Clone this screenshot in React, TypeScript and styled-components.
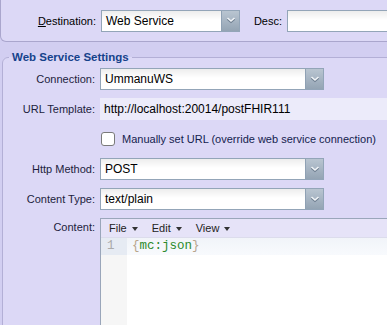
import React from 'react';
import styled, { createGlobalStyle } from 'styled-components';

const GlobalStyle = createGlobalStyle`
  html, body {
    margin: 0;
    padding: 0;
    overflow: hidden;
    background: #d2cef1;
    font-family: "Liberation Sans", Arial, sans-serif;
    font-size: 11px;
  }
`;

const Page = styled.div`
  width: 387px;
  height: 325px;
  overflow: hidden;
`;

const TopPanel = styled.div`
  display: flex;
  align-items: center;
  height: 41px;
  margin-right: -10px;
  background: #dcd8f6;
  border: 1px solid #aaa6cd;
  border-top: none;
  border-radius: 0 0 6px 6px;
`;

const TopLabel = styled.label<{ $width: number; $left?: number }>`
  width: ${(p) => p.$width}px;
  margin-left: ${(p) => p.$left ?? 0}px;
  margin-right: 5px;
  text-align: right;
  color: #000;
  white-space: nowrap;
`;

const Fieldset = styled.fieldset`
  margin: 8px -10px 0 2px;
  padding: 4px 0 0 0;
  height: 300px;
  border: 1px solid #b3afd6;
  border-radius: 6px;
  background: #dcd8f6;
`;

const Legend = styled.legend`
  margin-left: 6px;
  padding: 0 3px;
  font-size: 11.5px;
  font-weight: bold;
  color: #15428b;
  line-height: 14px;
`;

const Form = styled.div`
  display: flex;
  flex-direction: column;
  gap: 8px;
`;

const Row = styled.div<{ $top?: boolean }>`
  display: grid;
  grid-template-columns: 92px 1fr;
  column-gap: 5px;
  align-items: ${(p) => (p.$top ? 'start' : 'center')};
  min-height: 22px;
`;

const FieldLabel = styled.label<{ $pad?: number }>`
  text-align: right;
  color: #1d1d3d;
  white-space: nowrap;
  padding-top: ${(p) => p.$pad ?? 0}px;
`;

const ComboBox = styled.div<{ $width: number }>`
  display: flex;
  width: ${(p) => p.$width}px;
  height: 22px;
  box-sizing: border-box;
  border: 1px solid #93a5b8;
  background: linear-gradient(#ededed, #ffffff 45%);
`;

const ComboValue = styled.div`
  flex: 1;
  display: flex;
  align-items: center;
  padding-left: 4px;
  font-size: 12px;
  color: #000;
`;

const Trigger = styled.div`
  width: 17px;
  display: flex;
  align-items: center;
  justify-content: center;
  border-left: 1px solid #8fa1b4;
  background: linear-gradient(#b9c5d1, #94a4b4);
`;

const TextInput = styled.div`
  flex: 1;
  height: 22px;
  box-sizing: border-box;
  border: 1px solid #93a5b8;
  background: linear-gradient(#ededed, #ffffff 45%);
`;

const ReadOnlyValue = styled.div`
  height: 22px;
  display: flex;
  align-items: center;
  padding-left: 4px;
  background: #ecebfa;
  font-size: 12px;
  color: #000;
`;

const CheckRow = styled.div`
  display: flex;
  align-items: center;
  gap: 7px;
  padding-left: 1px;
`;

const CheckBox = styled.span`
  width: 12px;
  height: 12px;
  border: 1px solid #7a7a7a;
  border-radius: 3px;
  background: #fff;
`;

const CheckLabel = styled.span`
  color: #14224e;
  white-space: nowrap;
`;

const Editor = styled.div`
  height: 120px;
  border: 1px solid #9aa6ba;
  background: #fff;
`;

const EditorMenu = styled.div`
  display: flex;
  gap: 14px;
  height: 18px;
  align-items: center;
  padding-left: 8px;
  background: #e6e3f8;
  border-bottom: 1px solid #dcdcec;
  color: #222;
`;

const MenuItem = styled.span`
  display: flex;
  align-items: center;
  gap: 5px;
`;

const Caret = styled.span`
  width: 0;
  height: 0;
  margin-top: 2px;
  border-left: 3.5px solid transparent;
  border-right: 3.5px solid transparent;
  border-top: 4px solid #333;
`;

const CodeArea = styled.div`
  display: flex;
  height: 100%;
`;

const Gutter = styled.div`
  width: 26px;
  background: #f6f6f6;
`;

const GutterLine = styled.div`
  height: 17px;
  line-height: 17px;
  padding-left: 6px;
  background: #e6ebf3;
  color: #aaa;
  font-family: "Liberation Mono", monospace;
  font-size: 12.5px;
`;

const Lines = styled.div`
  flex: 1;
`;

const CodeLine = styled.div`
  height: 17px;
  line-height: 17px;
  padding-left: 5px;
  background: linear-gradient(#f1f4f9, #f8fafd);
  font-family: "Liberation Mono", monospace;
  font-size: 12.5px;
`;

const Brace = styled.span`
  color: #b8a58c;
`;

const Tag = styled.span`
  color: #2b8a2b;
`;

const Chevron = () => (
  <svg width="10" height="7" viewBox="0 0 10 7">
    <polyline points="1.5,2 5,5 8.5,2" fill="none" stroke="#6f7f90" strokeWidth="2" />
    <polyline points="1.5,1 5,4 8.5,1" fill="none" stroke="#f2f5f8" strokeWidth="1.6" />
  </svg>
);

const Combo: React.FC<{ width: number; value: string }> = ({ width, value }) => (
  <ComboBox $width={width}>
    <ComboValue>{value}</ComboValue>
    <Trigger>
      <Chevron />
    </Trigger>
  </ComboBox>
);

export default function App() {
  return (
    <Page>
      <GlobalStyle />
      <TopPanel>
        <TopLabel $width={95}>
          <u>D</u>estination:
        </TopLabel>
        <Combo width={139} value="Web Service" />
        <TopLabel $width={30} $left={12}>
          Desc:
        </TopLabel>
        <TextInput />
      </TopPanel>

      <Fieldset>
        <Legend>Web Service Settings</Legend>
        <Form>
          <Row>
            <FieldLabel>Connection:</FieldLabel>
            <Combo width={224} value="UmmanuWS" />
          </Row>
          <Row>
            <FieldLabel>URL Template:</FieldLabel>
            <ReadOnlyValue>http://localhost:20014/postFHIR111</ReadOnlyValue>
          </Row>
          <Row>
            <span />
            <CheckRow>
              <CheckBox />
              <CheckLabel>Manually set URL (override web service connection)</CheckLabel>
            </CheckRow>
          </Row>
          <Row>
            <FieldLabel>Http Method:</FieldLabel>
            <Combo width={224} value="POST" />
          </Row>
          <Row>
            <FieldLabel>Content Type:</FieldLabel>
            <Combo width={224} value="text/plain" />
          </Row>
          <Row $top>
            <FieldLabel $pad={3}>Content:</FieldLabel>
            <Editor>
              <EditorMenu>
                <MenuItem>File <Caret /></MenuItem>
                <MenuItem>Edit <Caret /></MenuItem>
                <MenuItem>View <Caret /></MenuItem>
              </EditorMenu>
              <CodeArea>
                <Gutter>
                  <GutterLine>1</GutterLine>
                </Gutter>
                <Lines>
                  <CodeLine>
                    <Brace>{'{'}</Brace>
                    <Tag>mc:json</Tag>
                    <Brace>{'}'}</Brace>
                  </CodeLine>
                </Lines>
              </CodeArea>
            </Editor>
          </Row>
        </Form>
      </Fieldset>
    </Page>
  );
}
